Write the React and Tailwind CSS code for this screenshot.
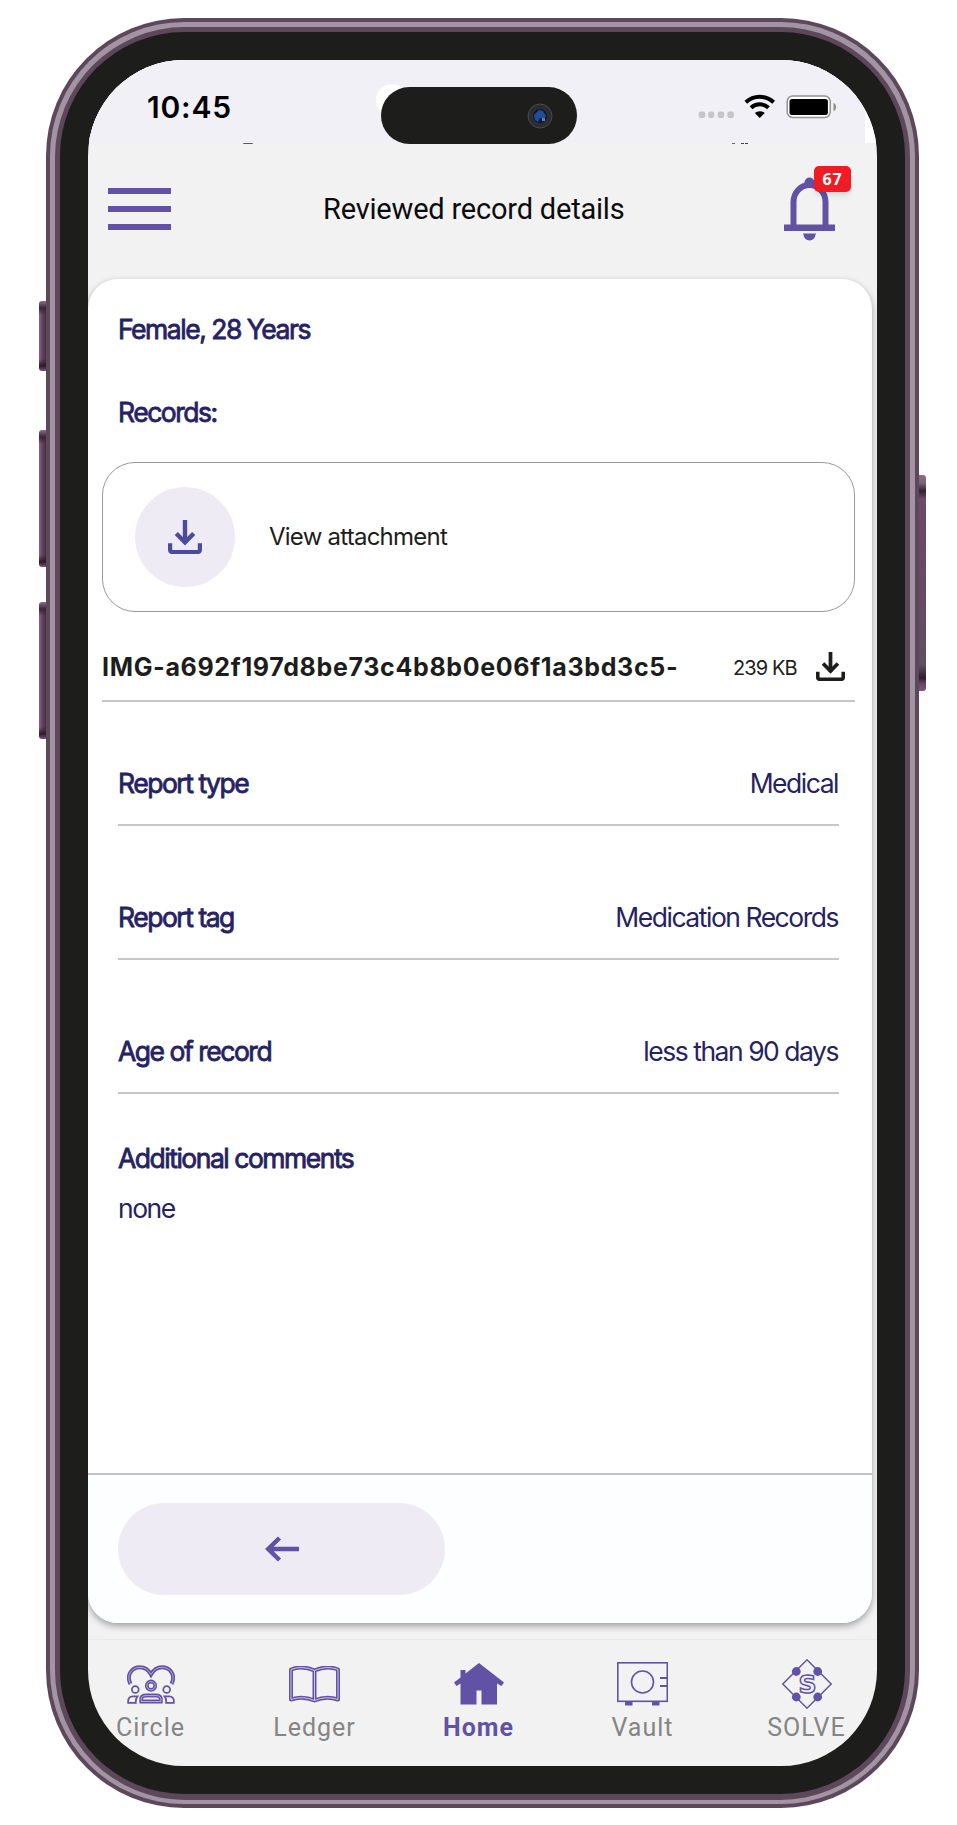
const C = "#6252a5";

function Download({ className }) {
  return (
    <svg viewBox="0 0 34 34" className={className} fill="none" stroke="currentColor">
      <path d="M17 0V23" strokeWidth="4.4" />
      <path d="M8.3 13.5L17 22.3L25.7 13.5" strokeWidth="4.4" />
      <path d="M2.1 23.2V29.6Q2.1 32 4.5 32H29.5Q31.900 32 31.900 29.6V23.200" strokeWidth="4.200" />
    </svg>
  );
}

function StatusBar() {
  return (
    <div className="relative flex h-[83px] bg-white">
      <div className="relative flex w-[777px] bg-[#f1f0f6] pt-[34px] pl-[59px]">
        <span className="w-[233.500px] whitespace-nowrap font-['Inter'] text-[30px] leading-[26px] font-semibold tracking-[0.8px] text-black">10:45</span>
        <span className="absolute top-[24px] left-[288px] h-8 w-8 rounded-full bg-white" />
        <div className="relative -mt-[7.500px] flex h-[57px] w-[196.500px] items-start justify-end rounded-full bg-[#1d1d1b] pt-4 pr-6">
          <svg viewBox="0 0 26 26" className="h-[26px] w-[26px]">
            <circle cx="13" cy="13" r="12" fill="#2c2d30" stroke="#4a4a4a" strokeWidth="1" />
            <circle cx="13" cy="13" r="7" fill="#10182c" />
            <path d="M7 12l5-5 4 1 3 5-2 3-4-1-2 4-3-2z" fill="#1f4f9c" />
            <path d="M15 15h3v3h-3z" fill="#5b7fb4" />
          </svg>
        </div>
        <svg viewBox="0 0 140 26" className="ml-[121px] h-[26px] w-[140px]">
          <g fill="#c5c5ca">
            <rect x="0.700" y="17.500" width="6.500" height="6.500" rx="2" />
            <rect x="10.200" y="17.500" width="6" height="6.500" rx="2" />
            <rect x="19.700" y="17.500" width="6.500" height="6.500" rx="2" />
            <rect x="29.400" y="17.500" width="6.500" height="6.500" rx="2" />
          </g>
          <g fill="none" stroke="#000" strokeWidth="4">
            <path d="M47.800 8.300A20.500 20.500 0 0 1 75.700 8.300" />
            <path d="M53 13.700A13 13 0 0 1 70.500 13.700" />
          </g>
          <path d="M56.800 19A7.500 7.500 0 0 1 66.700 19L61.750 24Z" />
          <rect x="89.200" y="2" width="43" height="21.500" rx="5.500" fill="#fff" stroke="#939393" strokeWidth="1.500" />
          <rect x="91.500" y="4.900" width="38.400" height="16" rx="2.500" />
          <path d="M135.500 8.800Q138.200 10 138.200 13T135.500 17.200Z" fill="#8d8d8d" />
        </svg>
      </div>
      <span className="absolute top-[83px] left-[155px] h-px w-[10px] rounded-b-full bg-[#5a5a5a]" />
      <span className="absolute top-[83px] left-[644px] h-px w-[3px] bg-[#666]" />
      <span className="absolute top-[83px] left-[653px] h-px w-[3px] bg-[#444]" />
      <span className="absolute top-[83px] left-[657px] h-px w-[3px] bg-[#444]" />
    </div>
  );
}

function Header() {
  return (
    <div className="relative flex h-[136px] items-center pb-[5px]">
      <div className="ml-5 flex w-[63px] flex-col gap-3">
        <span className="h-[6px] bg-[#6252a5]" />
        <span className="h-[6px] bg-[#6252a5]" />
        <span className="h-[6px] bg-[#6252a5]" />
      </div>
      <h1 className="ml-[152px] w-[461px] whitespace-nowrap font-['Roboto'] text-[29px] leading-[34px] tracking-[-0.200px] text-[#0c0c0c]">Reviewed record details</h1>
      <svg viewBox="0 0 51 64" className="h-[64px] w-[51px]" fill={C}>
        <path d="M20.500 10V5Q21.500 0.500 25.500 0.500T30.500 5V10Z" />
        <path d="M9.500 49V25A16 17 0 0 1 41.500 25V49" fill="none" stroke={C} strokeWidth="6" />
        <path d="M0 47.500H51V54H0Z" />
        <path d="M19 56.500H32Q30.500 63.500 25.500 63.500T19 56.500Z" />
      </svg>
      <span className="absolute top-[23px] left-[726px] flex h-[26px] w-[37px] items-center justify-center rounded-[5px] bg-[#ee1c25] pb-[1px] font-['Open_Sans'] text-[16px] font-bold tracking-[0.800px] text-white shadow-md">67</span>
    </div>
  );
}

const value = "whitespace-nowrap font-['Inter'] text-[26.500px] leading-[32px] tracking-[-1.480px] text-[#262262]";
const label = value + " [-webkit-text-stroke:0.8px_#262262]";

function Row({ name, children }) {
  return (
    <div className="mr-[33px] ml-[30px] flex h-[134px] items-end justify-between border-b-2 border-[#c6c6c9] pb-[25px]">
      <span className={label}>{name}</span>
      <span className={"mr-[1px] " + value}>{children}</span>
    </div>
  );
}

const CircleIcon = () => (
  <svg viewBox="0 0 48 39" className="h-[39px] w-[48px]" fill="none" stroke={C}>
    <path d="M3.500 19C-1.500 9 6 2.300 13 2.300Q20 2.300 24 9.500Q28 2.300 35 2.300C42 2.300 49.500 9 44.500 19" strokeWidth="4" />
    <path d="M3.500 19C-1.500 9 6 2.300 13 2.300Q20 2.300 24 9.500Q28 2.300 35 2.300C42 2.300 49.500 9 44.500 19" strokeWidth="0.700" stroke="#d9d3ea" />
    <circle cx="24" cy="20.700" r="4.200" strokeWidth="3.800" />
    <circle cx="24" cy="20.700" r="4.200" strokeWidth="0.700" stroke="#d9d3ea" />
    <circle cx="8.300" cy="24.500" r="3.400" strokeWidth="1.700" />
    <circle cx="39.700" cy="24.500" r="3.400" strokeWidth="1.700" />
    <path d="M1.200 37.800Q0.500 31.300 6 31.300H10.500Q8.500 34 8.800 37.800Z" strokeWidth="1.800" />
    <path d="M46.800 37.800Q47.500 31.300 42 31.300H37.500Q39.500 34 39.200 37.800Z" strokeWidth="1.800" />
    <path d="M14.200 36.500Q13 30.600 19 30.600H29Q35 30.600 33.800 36.500Z" strokeWidth="4" />
    <path d="M14.200 36.500Q13 30.600 19 30.600H29Q35 30.600 33.800 36.500Z" strokeWidth="0.700" stroke="#d9d3ea" />
  </svg>
);

const LedgerIcon = () => (
  <svg viewBox="0 0 51 37" className="h-[37px] w-[51px]" fill="none" strokeLinejoin="round">
    <path d="M25.500 4.500Q13 -1 2 3.500V33.500Q14 29.500 25.500 34.500Q37 29.500 49 33.500V3.500Q38 -1 25.500 4.500V34.500" stroke={C} strokeWidth="4" />
    <path d="M25.500 4.500Q13 -1 2 3.500V33.500Q14 29.500 25.500 34.500Q37 29.500 49 33.500V3.500Q38 -1 25.500 4.500V34.500" stroke="#d9d3ea" strokeWidth="0.900" />
  </svg>
);

const HomeIcon = () => (
  <svg viewBox="0 0 50 42" className="h-[42px] w-[50px]" fill={C}>
    <path d="M25 0L50 19.500L47.500 23L43 20.500V41.500H27.500V27.500H22.500V41.500H6.500V20.500L2.500 23L0 19.500L6.500 14.500V7H11.500V10.500Z" />
  </svg>
);

const VaultIcon = () => (
  <svg viewBox="0 0 51 44" className="h-[44px] w-[51px]" fill="none" stroke={C} strokeWidth="1.600">
    <rect x="0.800" y="0.800" width="49.500" height="38.500" />
    <circle cx="25.500" cy="20" r="11" />
    <path d="M43 16H50M43 24H50" strokeWidth="1.800" />
    <path d="M8 39.500H15.500V43.500H8ZM35 39.500H42.500V43.500H35Z" fill={C} stroke="none" />
  </svg>
);

const SolveIcon = () => (
  <svg viewBox="0 0 50 50" className="h-[50px] w-[50px]" fill="none" stroke={C}>
    <path d="M25 0.800L49.200 25L25 49.200L0.800 25Z" strokeWidth="1.400" />
    <g fill={C} stroke="none">
      <circle cx="14.300" cy="12.500" r="4.400" />
      <circle cx="35.700" cy="12.500" r="4.400" />
      <circle cx="14.300" cy="38" r="4.400" />
      <circle cx="35.700" cy="38" r="4.400" />
    </g>
    <text x="25.500" y="34" textAnchor="middle" fontFamily="DejaVu Sans, sans-serif" fontWeight="700" fontSize="25" fill="#f2f2f2" strokeWidth="1.500">S</text>
  </svg>
);

function Tab({ icon, name, active }) {
  return (
    <div className="flex w-[164px] flex-col items-center">
      <div className="flex h-[57px] items-center pb-[1px]">{icon}</div>
      <span className={"whitespace-nowrap font-['Roboto'] text-[25px] leading-[30px] tracking-[1px] " + (active ? "font-bold text-[#6252a5]" : "text-[#858585]")}>{name}</span>
    </div>
  );
}

const keyLeft = "absolute left-[39px] w-2 rounded-l-[3px] bg-[linear-gradient(to_bottom,#8a6f86_0px,#3a2438_7px,transparent_14px,transparent_calc(100%_-_12px),#2c1a2b_calc(100%_-_5px),#7b5576_100%),linear-gradient(to_right,#84657f,#5e3d59_50%,#3f2a3e)]";

export default function App() {
  return (
    <div className="relative h-[1825px] w-[957px] overflow-hidden bg-white pt-[18px] pl-[46px]">
      <span className={keyLeft + " top-[301px] h-[70px]"} />
      <span className={keyLeft + " top-[430px] h-[137px]"} />
      <span className={keyLeft + " top-[602px] h-[137px]"} />
      <span className="absolute top-[475px] left-[917px] h-[216px] w-[9px] rounded-r-[3px] bg-[linear-gradient(to_bottom,#857083_0px,#7d6279_8px,#33202f_16px,#6f4a69_24px,#6f4668_60px,#604f62_190px,#2d1c2c_203px,#6f4668_209px,#7b5576_100%)]" />
      <div className="relative h-[1790px] w-[872.500px] rounded-[138px] bg-[#5c475b] p-[4px]">
        <div className="h-full rounded-[134px] bg-[#a294a2] p-[4.500px]">
          <div className="h-full rounded-[130px] bg-[#5c475b] p-[5.500px]">
            <div className="h-full rounded-[124px] bg-[#1d1d1b] p-[28px]">
              <div className="flex h-full flex-col overflow-hidden rounded-[96px] bg-[#f2f2f2]">
                <StatusBar />
                <Header />
                <main className="flex h-[1344px] w-[784px] flex-col overflow-hidden rounded-[30px] bg-white shadow-[0_3px_7px_rgba(0,0,0,0.35)]">
                  <p className={"mt-[34px] ml-[30px] " + label}>Female, 28 Years</p>
                  <p className={"mt-[51px] ml-[30px] " + label}>Records:</p>
                  <section className="mt-[34px] ml-[14px] flex h-[150px] w-[753px] items-center rounded-[33px] border-[1.500px] border-[#999] pl-[32px]">
                    <span className="flex h-[100px] w-[100px] items-center justify-center rounded-full bg-[#eeebf5] text-[#4b4a9c]">
                      <Download className="h-[34px] w-[34px]" />
                    </span>
                    <span className="ml-[34px] whitespace-nowrap font-['Inter'] text-[24px] tracking-[-0.760px] text-[#1d1d1b]">View attachment</span>
                  </section>
                  <section className="mt-[26px] ml-[14px] flex h-[64px] w-[753px] items-center border-b-2 border-[#c6c6c9] pb-[3px]">
                    <span className="w-[631px] whitespace-nowrap font-['Inter'] text-[25px] font-bold tracking-[0.660px] text-[#1d1d1b]">IMG-a692f197d8be73c4b8b0e06f1a3bd3c5-</span>
                    <span className="w-[83px] whitespace-nowrap font-['Inter'] text-[20px] tracking-[-0.900px] text-[#1d1d1b]">239 KB</span>
                    <Download className="mb-[2px] h-[29px] w-[29px] text-[#1d1d1b]" />
                  </section>
                  <div className="-mt-[10px]">
                    <Row name="Report type">Medical</Row>
                    <Row name="Report tag">Medication Records</Row>
                    <Row name="Age of record">less than 90 days</Row>
                  </div>
                  <p className={"mt-[48px] ml-[30px] " + label}>Additional comments</p>
                  <p className={"mt-[18px] ml-[30px] " + value}>none</p>
                  <footer className="mt-auto flex h-[150px] items-center border-t-2 border-[#c3c3c6] bg-[#fcfeff] pl-[30px]">
                    <button className="flex h-[92px] w-[327px] items-center justify-center rounded-full bg-[#eeebf5]">
                      <svg viewBox="0 0 34 26" className="h-[26px] w-[34px]" fill="none" stroke={C} strokeWidth="4.500">
                        <path d="M3 13H34M14.500 2L3.200 13L14.500 24" />
                      </svg>
                    </button>
                  </footer>
                </main>
                <nav className="mt-[16px] flex h-[127px] border-t border-[#e9e9e9] pt-[16px]">
                  <div className="-ml-[19.500px] flex">
                    <Tab icon={<CircleIcon />} name="Circle" />
                    <Tab icon={<LedgerIcon />} name="Ledger" />
                    <Tab icon={<HomeIcon />} name="Home" active />
                    <Tab icon={<VaultIcon />} name="Vault" />
                    <Tab icon={<SolveIcon />} name="SOLVE" />
                  </div>
                </nav>
              </div>
            </div>
          </div>
        </div>
      </div>
    </div>
  );
}
